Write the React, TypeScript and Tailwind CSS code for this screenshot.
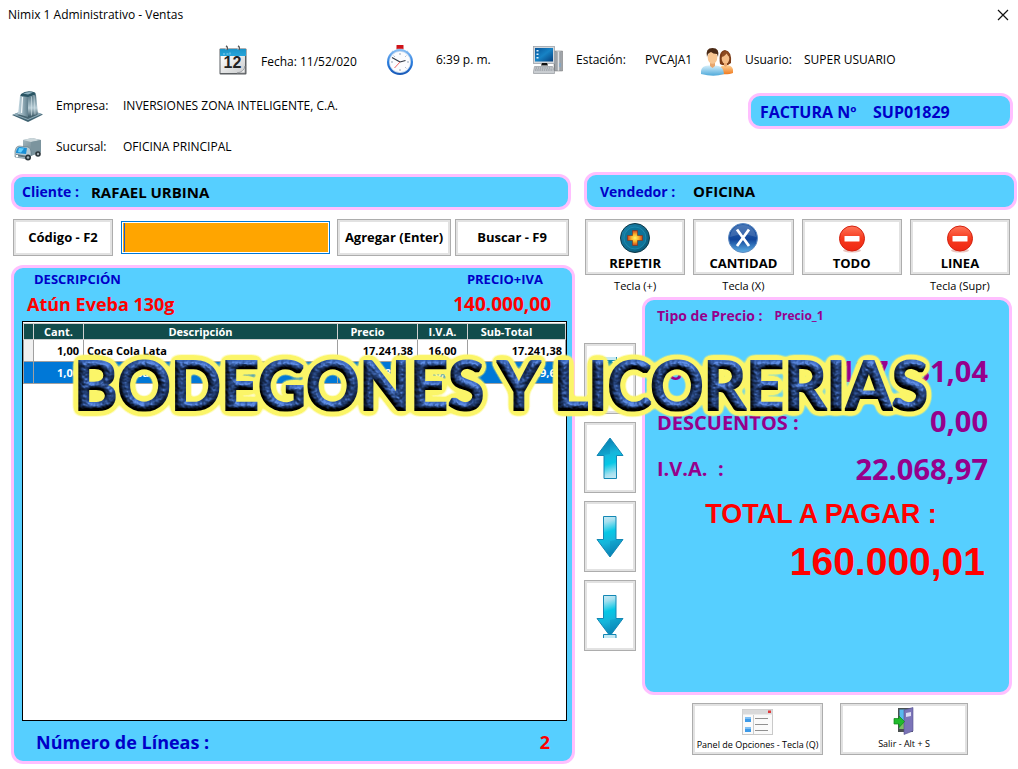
import React from "react";

const SANS = "font-['Open_Sans','Noto_Sans',sans-serif]";
const PANEL = "rounded-xl border-3 border-[#ffbfff] bg-[#56cfff]";
const BUTTON =
  "border border-[#adadad] bg-white shadow-[inset_0_0_0_2px_#e2e2e2] font-bold text-black";

function CalendarIcon() {
  return (
    <svg className="h-[31px] w-7 shrink-0" viewBox="0 0 28 31" aria-hidden="true">
      <defs>
        <linearGradient id="cal-top" x1="0" y1="0" x2="0" y2="1">
          <stop offset="0" stopColor="#1b93c8" />
          <stop offset="1" stopColor="#27a5da" />
        </linearGradient>
        <linearGradient id="cal-page" x1="0" y1="0" x2="1" y2="1">
          <stop offset="0" stopColor="#ffffff" />
          <stop offset="1" stopColor="#c9cbcc" />
        </linearGradient>
      </defs>
      <rect x="0.5" y="3.5" width="27" height="26" rx="1" fill="#5b5f62" />
      <rect x="1.5" y="11" width="24.5" height="17" fill="url(#cal-page)" />
      <rect x="1" y="4" width="26" height="7" fill="url(#cal-top)" />
      <path d="M4 9h2M7.500 9h2M11 7.500v2" stroke="#8ed3f0" strokeWidth="1" />
      <path d="M26 21v7h-8q7-1 8-7z" fill="#eeeeee" stroke="#8a8d90" strokeWidth="0.7" />
      <path d="M7 1q2 1 1 4M19 1q2 1 1 4" fill="none" stroke="#555" strokeWidth="1.4" />
      <path d="M6 1.500q2 1 1 3M18 1.500q2 1 1 3" fill="none" stroke="#eee" strokeWidth="0.9" />
      <text x="13.500" y="23" textAnchor="middle" fontSize="16" fontWeight="700" fill="#222" fontFamily="Liberation Sans, sans-serif">12</text>
    </svg>
  );
}

function StopwatchIcon() {
  return (
    <svg className="h-[31px] w-7 shrink-0" viewBox="0 0 28 31" aria-hidden="true">
      <defs>
        <linearGradient id="watch-ring" x1="0" y1="0" x2="0" y2="1">
          <stop offset="0" stopColor="#8dc2f5" />
          <stop offset="0.5" stopColor="#2c7fe0" />
          <stop offset="1" stopColor="#1757b5" />
        </linearGradient>
      </defs>
      <rect x="9.500" y="0" width="7" height="4.500" rx="0.500" fill="#d01318" />
      <path d="M11 4.500h4v2h-4zM5 6l3 2M21 6l-3 2" stroke="#c9d3df" strokeWidth="1.500" fill="#ccc" />
      <circle cx="13" cy="17" r="13" fill="url(#watch-ring)" />
      <circle cx="13" cy="17" r="10.900" fill="#c9dcf0" />
      <circle cx="13" cy="17" r="10.200" fill="#fbfcfe" />
      <path d="M13 8v2M13 24v2M4 17h2M20 17h2M6.700 10.700l1 1M18.300 22.300l1 1M19.300 10.700l-1 1" stroke="#7f92a8" strokeWidth="0.800" />
      <path d="M13 17l-8-4.500M13 17l5.500-1.500" stroke="#2f3540" strokeWidth="1.100" />
      <path d="M13 17l-5.500 6" stroke="#f06565" strokeWidth="1" />
    </svg>
  );
}

function ComputerIcon() {
  return (
    <svg className="h-[28px] w-[30px] shrink-0" viewBox="0 0 30 28" aria-hidden="true">
      <defs>
        <linearGradient id="pc-screen" x1="0" y1="0" x2="1" y2="1">
          <stop offset="0" stopColor="#07549a" />
          <stop offset="0.5" stopColor="#1783c5" />
          <stop offset="1" stopColor="#063f7d" />
        </linearGradient>
        <linearGradient id="pc-tower" x1="0" y1="0" x2="1" y2="0">
          <stop offset="0" stopColor="#777c82" />
          <stop offset="0.500" stopColor="#e8eaec" />
          <stop offset="1" stopColor="#8b9096" />
        </linearGradient>
      </defs>
      <path d="M21 5h8.500v20h-8.500z" fill="url(#pc-tower)" stroke="#777" strokeWidth="0.500" />
      <path d="M24 6v19M27 6v19" stroke="#70757b" strokeWidth="0.700" />
      <path d="M27 17v4" stroke="#72a8d8" strokeWidth="1" />
      <rect x="0.500" y="0.500" width="21" height="17" fill="#d3d7dc" stroke="#9da3aa" strokeWidth="0.800" />
      <rect x="2" y="2" width="18" height="13.500" fill="url(#pc-screen)" />
      <path d="M3.500 4h2v1.500h-2zM3.500 7.500h2v1.500h-2zM3.500 11h2v1.500h-2z" fill="#dff1ff" />
      <path d="M9 17h5l1 2.500h-7z" fill="#111" />
      <path d="M1.500 20.500h18l2 5v2h-21v-2z" fill="#c9cdd1" stroke="#868b91" strokeWidth="0.600" />
      <path d="M2.500 22h16M2 24h18" stroke="#7f858b" strokeWidth="0.900" strokeDasharray="1.500 0.700" />
    </svg>
  );
}

function UsersIcon() {
  return (
    <svg className="mt-1 h-7 w-8 shrink-0" viewBox="0 0 32 28" aria-hidden="true">
      <defs>
        <linearGradient id="user-blue" x1="0" y1="0" x2="0" y2="1">
          <stop offset="0" stopColor="#d5effb" />
          <stop offset="1" stopColor="#4ea9da" />
        </linearGradient>
        <linearGradient id="user-orange" x1="0" y1="0" x2="0" y2="1">
          <stop offset="0" stopColor="#ffd59a" />
          <stop offset="1" stopColor="#f0791d" />
        </linearGradient>
      </defs>
      <path d="M19 16Q17 3 24 2Q31 3 30 15L27 17H21z" fill="#7c3d18" />
      <path d="M17 26q0-9 8-9t7 8q-4 2-15 1z" fill="url(#user-orange)" />
      <ellipse cx="24.500" cy="10.500" rx="3.800" ry="5.200" fill="#f5bd87" />
      <path d="M23 15h3v3l-1.500 1-1.500-1z" fill="#edaa70" />
      <path d="M20.500 9q4-1 5-4 1 3 3.500 4-1-6-4.500-6t-4 6z" fill="#8f4b20" />
      <path d="M0 26q-1-8 7-8.500h8q8 .500 8 8.500-10 3.500-23 0z" fill="url(#user-blue)" />
      <path d="M9 13h5v5l-2.500 2-2.500-2z" fill="#e8a66d" />
      <ellipse cx="11.500" cy="9.500" rx="4.800" ry="6.300" fill="#f8c692" />
      <path d="M6 9Q4 0 11.500 0T17 9l-1-3q-4 0-6-2-2 1-3 2z" fill="#4b2a15" />
    </svg>
  );
}

function BuildingIcon() {
  return (
    <svg className="h-[31px] w-8 shrink-0" viewBox="0 0 32 31" aria-hidden="true">
      <defs>
        <linearGradient id="tower-left" x1="0" y1="0" x2="1" y2="0">
          <stop offset="0" stopColor="#c6dae3" />
          <stop offset="1" stopColor="#607f8d" />
        </linearGradient>
        <linearGradient id="tower-right" x1="0" y1="0" x2="0" y2="1">
          <stop offset="0" stopColor="#50717f" />
          <stop offset="0.600" stopColor="#b9ced7" />
          <stop offset="1" stopColor="#3a5866" />
        </linearGradient>
      </defs>
      <path d="M0 24l15-6 16 5.500-15 7.500z" fill="#3f6271" />
      <path d="M1 23.500l15-5.500 14 5-14 6z" fill="#8fabb8" />
      <path d="M5 24l10-3.500 11 3-10 4.500z" fill="#46636f" />
      <path d="M9 3q6-4.500 14-1.500l1 2-8 3-8-1z" fill="#2a5564" />
      <path d="M11 2.500q5-2.500 10-1l-5 2z" fill="#8fb2c0" />
      <path d="M8 5l8 1v20l-10-3z" fill="url(#tower-left)" />
      <path d="M16 6l8-2.500 2 19.500-10 3z" fill="url(#tower-right)" />
      <path d="M19.500 5.500v19M22 4.500l1 19" stroke="#d6e5eb" strokeWidth="0.600" />
      <path d="M10.500 6l-1 16" stroke="#f2f8fa" strokeWidth="1.200" />
    </svg>
  );
}

function TruckIcon() {
  return (
    <svg className="h-[23px] w-7 shrink-0" viewBox="0 0 28 23" aria-hidden="true">
      <defs>
        <linearGradient id="truck-box" x1="0" y1="0" x2="1" y2="1">
          <stop offset="0" stopColor="#a6b9c0" />
          <stop offset="1" stopColor="#55707c" />
        </linearGradient>
      </defs>
      <path d="M9 2l9-2 9 2v12l-11 4-7-4z" fill="url(#truck-box)" />
      <path d="M9 2l9-2 9 2-10 2z" fill="#cbd7db" />
      <path d="M17 4v14l10-4V2z" fill="#7b949e" />
      <circle cx="24" cy="16" r="2.800" fill="#2b353a" />
      <circle cx="24" cy="16" r="1.200" fill="#a9b4b9" />
      <path d="M1 13q1-5 4-5l9 1q3 1 3 5v4l-3 3-13-2z" fill="#b7cad3" stroke="#5d7682" strokeWidth="0.600" />
      <path d="M2 14q1-5 4-5l7 1-1 6-10-1z" fill="#1a8fd5" />
      <path d="M5 10l5 .5-3 4-3-.5z" fill="#66d2ff" />
      <path d="M2 16l9 1.500v2L2 18z" fill="#60747e" />
      <circle cx="14" cy="19.500" r="3" fill="#2b353a" />
      <circle cx="14" cy="19.500" r="1.300" fill="#a9b4b9" />
      <circle cx="3" cy="18" r="1.200" fill="#fff" />
    </svg>
  );
}

function PlusIcon() {
  return (
    <svg className="h-[30px] w-[30px]" viewBox="0 0 30 30" aria-hidden="true">
      <defs>
        <linearGradient id="plus-ball" x1="0" y1="0" x2="1" y2="1">
          <stop offset="0" stopColor="#1c84ae" />
          <stop offset="1" stopColor="#075673" />
        </linearGradient>
        <radialGradient id="plus-cross">
          <stop offset="0" stopColor="#fff86a" />
          <stop offset="0.500" stopColor="#f9b22b" />
          <stop offset="1" stopColor="#cf421c" />
        </radialGradient>
      </defs>
      <circle cx="15" cy="15" r="14.500" fill="url(#plus-ball)" stroke="#103745" />
      <circle cx="15" cy="15" r="11" fill="#0e7398" stroke="#1f8fb4" strokeWidth="0.800" />
      <path d="M12.500 7.500h5v5H22.500v5h-5v5h-5v-5h-5v-5h5z" fill="url(#plus-cross)" stroke="#7f321c" strokeWidth="0.600" />
    </svg>
  );
}

function TimesIcon() {
  return (
    <svg className="h-[30px] w-[30px]" viewBox="0 0 30 30" aria-hidden="true">
      <defs>
        <linearGradient id="times-ball" x1="0" y1="0" x2="0" y2="1">
          <stop offset="0" stopColor="#2d63ab" />
          <stop offset="0.550" stopColor="#11459a" />
          <stop offset="1" stopColor="#5db0e6" />
        </linearGradient>
      </defs>
      <circle cx="15" cy="15" r="14.500" fill="url(#times-ball)" stroke="#5c89c1" />
      <path d="M2 14q2-12 13-12t13 12q-13-5-26 0z" fill="#ffffff" opacity="0.150" />
      <path d="M9 6.500l12 16.500M21 6.500L9 23" stroke="#fff" strokeWidth="2.800" />
    </svg>
  );
}

function MinusIcon() {
  return (
    <svg className="h-[30px] w-[30px]" viewBox="0 0 30 30" aria-hidden="true">
      <defs>
        <linearGradient id="minus-ball" x1="0" y1="0" x2="0" y2="1">
          <stop offset="0" stopColor="#ff765a" />
          <stop offset="0.500" stopColor="#f63a1d" />
          <stop offset="1" stopColor="#ef2814" />
        </linearGradient>
      </defs>
      <ellipse cx="15" cy="27.500" rx="9" ry="2" fill="#e9c5c0" />
      <circle cx="15" cy="15.500" r="12.500" fill="url(#minus-ball)" stroke="#d3200f" />
      <rect x="7.500" y="13" width="15" height="5.500" rx="0.600" fill="#fff" />
    </svg>
  );
}

function ArrowIcon({ up = false, bar = false }: { up?: boolean; bar?: boolean }) {
  return (
    <svg className={up ? "h-11 w-7 rotate-180" : "h-11 w-7"} viewBox="0 0 28 44" aria-hidden="true">
      <defs>
        <linearGradient id="arrow-fill" x1="0" y1="0" x2="0.200" y2="1">
          <stop offset="0" stopColor="#d9eef6" />
          <stop offset="0.200" stopColor="#a5e0ef" />
          <stop offset="0.450" stopColor="#06c8e6" />
          <stop offset="0.700" stopColor="#17b4da" />
          <stop offset="1" stopColor="#0a86b8" />
        </linearGradient>
      </defs>
      <path d="M7.500 1.500h12.500v23h7L14 42 1 24.500h6.500z" fill="url(#arrow-fill)" stroke="#1387b4" />
      <path d="M14 26v15l12-16h-6z" fill="#0786b5" opacity="0.350" />
      {bar && <path d="M7.500 44v-3.500h12.500V44" fill="#c4e8f3" stroke="#1387b4" />}
    </svg>
  );
}

function OptionsIcon() {
  return (
    <svg className="h-[26px] w-[31px]" viewBox="0 0 31 26" aria-hidden="true">
      <rect x="0.500" y="0.500" width="30" height="25" fill="#fafafa" stroke="#c9c9c9" />
      <rect x="0.500" y="0.500" width="30" height="5" fill="#d9d9da" />
      <rect x="26" y="1.500" width="3" height="2.500" fill="#e0383a" />
      <path d="M11.500 6v19" stroke="#ccc" />
      <rect x="3" y="8" width="6" height="5" fill="#3d9ae8" />
      <rect x="3" y="18" width="6" height="5" fill="#3d9ae8" />
      <path d="M3 8h6v2H3zM3 18h6v2H3z" fill="#7fc0f5" />
      <path d="M13 9.500h13M13 15.500h13M13 21.500h13" stroke="#909090" />
    </svg>
  );
}

function ExitIcon() {
  return (
    <svg className="h-7 w-[22px]" viewBox="0 0 22 28" aria-hidden="true">
      <path d="M5 1h15v24H5z" fill="#4a5050" />
      <path d="M6.500 2.500h8V22h-8z" fill="#58b8ee" />
      <path d="M6.500 15h6v7h-6z" fill="#7dbd64" />
      <path d="M11 3l9-2.500V24l-9 3.500z" fill="#7b74b8" stroke="#56508f" strokeWidth="0.600" />
      <path d="M13 6l5-1v4l-5 1z" fill="#dcdcf3" />
      <path d="M1 11.500h5V9l5.500 5.500L6 20.500V17H1z" fill="#20bb2c" stroke="#0b861a" strokeWidth="0.700" />
    </svg>
  );
}

function BannerFilter() {
  return (
    <svg className="absolute h-0 w-0" aria-hidden="true">
      <filter id="embossed" x="-5%" y="-20%" width="110%" height="140%" colorInterpolationFilters="sRGB">
        <feMorphology in="SourceAlpha" operator="dilate" radius="1" result="glyphs" />
        <feGaussianBlur in="glyphs" stdDeviation="3" result="wide" />
        <feComponentTransfer in="wide" result="outline">
          <feFuncA type="linear" slope="16" intercept="-0.300" />
        </feComponentTransfer>
        <feFlood floodColor="#fbf568" result="yellow" />
        <feComposite in="yellow" in2="outline" operator="in" result="halo" />
        <feGaussianBlur in="glyphs" stdDeviation="2" result="soft" />
        <feTurbulence type="fractalNoise" baseFrequency="0.300" numOctaves="2" seed="4" result="noise" />
        <feColorMatrix in="noise" type="matrix" values="0 0 0 0 0  0 0 0 0 0  0 0 0 0 0  0.500 0 0 0 0" result="grain" />
        <feComposite in="soft" in2="grain" operator="arithmetic" k1="0" k2="0.700" k3="0.350" k4="0" result="height" />
        <feDiffuseLighting in="height" surfaceScale="6" diffuseConstant="1.200" lightingColor="#274a8c" result="light">
          <feDistantLight azimuth="290" elevation="42" />
        </feDiffuseLighting>
        <feSpecularLighting in="height" surfaceScale="6" specularConstant="0.600" specularExponent="12" lightingColor="#93a6ca" result="shine">
          <feDistantLight azimuth="290" elevation="25" />
        </feSpecularLighting>
        <feComposite in="light" in2="shine" operator="arithmetic" k1="0" k2="1" k3="0.600" k4="0" result="lit" />
        <feComposite in="lit" in2="glyphs" operator="in" result="letters" />
        <feMerge>
          <feMergeNode in="halo" />
          <feMergeNode in="letters" />
        </feMerge>
      </filter>
    </svg>
  );
}

const lines = [
  { qty: "1,00", name: "Coca Cola Lata", price: "17.241,38", tax: "16,00", total: "17.241,38" },
  { qty: "1,00", name: "Atún Eveba 130g", price: "120.689,66", tax: "16,00", total: "120.689,66" },
];

const actions = [
  { label: "REPETIR", hint: "Tecla (+)", icon: <PlusIcon /> },
  { label: "CANTIDAD", hint: "Tecla (X)", icon: <TimesIcon /> },
  { label: "TODO", hint: "", icon: <MinusIcon /> },
  { label: "LINEA", hint: "Tecla (Supr)", icon: <MinusIcon /> },
];

function Header() {
  return (
    <header>
      <div className="flex h-[30px] items-center justify-between pr-[7px] pl-2">
        <h1 className="text-xs">Nimix 1 Administrativo - Ventas</h1>
        <button type="button" aria-label="Cerrar" className="flex h-4 w-4 items-center justify-center">
          <svg className="h-3 w-3" viewBox="0 0 12 12" aria-hidden="true">
            <path d="M1 1l10 10M11 1L1 11" stroke="#111" strokeWidth="1.200" />
          </svg>
        </button>
      </div>
      <div className="flex h-[60px] items-center pl-[219px] text-xs whitespace-nowrap">
        <div className="flex w-[168px] items-center gap-[14px]">
          <CalendarIcon />
          <span className="pt-1">Fecha: 11/52/020</span>
        </div>
        <div className="flex w-[146px] items-center gap-[21px]">
          <StopwatchIcon />
          <span>6:39 p. m.</span>
        </div>
        <div className="flex w-[168px] items-center">
          <ComputerIcon />
          <span className="ml-[13px] w-[69px]">Estación:</span>
          <span>PVCAJA1</span>
        </div>
        <div className="flex items-center">
          <UsersIcon />
          <span className="ml-3 w-[59px]">Usuario:</span>
          <span>SUPER USUARIO</span>
        </div>
      </div>
      <div className="flex h-[82px] items-start justify-between pr-[5px] pl-3">
        <div className="flex flex-col gap-[9px] text-xs">
          <div className="flex h-8 items-center">
            <span className="w-11"><BuildingIcon /></span>
            <span className="w-[67px]">Empresa:</span>
            <span>INVERSIONES ZONA INTELIGENTE, C.A.</span>
          </div>
          <div className="flex h-8 items-center">
            <span className="w-11 pt-1 pl-[2px]"><TruckIcon /></span>
            <span className="w-[67px]">Sucursal:</span>
            <span>OFICINA PRINCIPAL</span>
          </div>
        </div>
        <div className={`mt-[3px] flex h-9 w-[265px] items-center pt-[2px] pl-[9px] text-base font-bold text-[#0000c8] ${PANEL}`}>
          <span className="w-[113px]">FACTURA Nº</span>
          <span>SUP01829</span>
        </div>
      </div>
    </header>
  );
}

function LinesTable() {
  return (
    <div className="flex-1 border border-black bg-white pt-px">
      <table className="w-full table-fixed border-collapse text-[11px] leading-4 font-bold">
        <colgroup>
          <col className="w-[10px]" />
          <col className="w-[50px]" />
          <col />
          <col className="w-20" />
          <col className="w-[50px]" />
          <col className="w-[98px]" />
        </colgroup>
        <thead>
          <tr className="bg-[#124c4c] leading-[15px] text-white">
            <th className="border border-[#d0d0d0] p-0" aria-label="Selección" />
            <th className="border border-[#d0d0d0] p-0">Cant.</th>
            <th className="border border-[#d0d0d0] p-0 pr-5">Descripción</th>
            <th className="border border-[#d0d0d0] p-0 pr-5">Precio</th>
            <th className="border border-[#d0d0d0] p-0">I.V.A.</th>
            <th className="border border-[#d0d0d0] p-0 pr-5">Sub-Total</th>
          </tr>
        </thead>
        <tbody>
          {lines.map((line, i) => (
            <tr
              key={line.name}
              className={i === 1 ? "h-[22px] bg-[#0078d7] text-white" : "h-[22px] bg-white text-black"}
            >
              <td className={i === 1 ? "border border-[#a0a0a0] p-0" : "border border-[#a0a0a0] bg-[#f0f0f0] p-0"} />
              <td className="border border-[#a0a0a0] p-0 pr-1 text-right">{line.qty}</td>
              <td className="border border-[#a0a0a0] p-0 pl-[3px]">{line.name}</td>
              <td className="border border-[#a0a0a0] p-0 pr-1 text-right">{line.price}</td>
              <td className="border border-[#a0a0a0] p-0 text-center">{line.tax}</td>
              <td className="border border-[#a0a0a0] p-0 pr-[3px] text-right">{line.total}</td>
            </tr>
          ))}
        </tbody>
      </table>
    </div>
  );
}

function SaleColumn() {
  return (
    <section className="flex min-w-0 flex-col pt-[2px]">
      <div className={`mr-1 flex h-9 items-center gap-3 pl-2 text-[15px] font-bold ${PANEL}`}>
        <span className="text-sm text-[#0000c8]">Cliente :</span>
        <span>RAFAEL URBINA</span>
      </div>
      <div className="mt-[9px] mr-[6px] ml-[2px] flex h-[37px] items-center text-[13px]">
        <button type="button" className={`h-full w-[100px] ${BUTTON}`}>Código - F2</button>
        <input
          aria-label="Código del producto"
          className="mr-[7px] ml-2 h-[33px] min-w-0 flex-1 border border-[#0078d7] bg-[#ffa500] px-1 shadow-[inset_0_0_0_1px_#ffffff,inset_2px_0_0_0_#ffa500,inset_3px_0_0_0_#1a5fd0] outline-none"
        />
        <button type="button" className={`h-full w-[114px] whitespace-nowrap ${BUTTON}`}>Agregar (Enter)</button>
        <button type="button" className={`ml-1 h-full w-[114px] ${BUTTON}`}>Buscar - F9</button>
      </div>
      <div className={`mt-[9px] flex flex-1 flex-col pr-[5px] pl-2 font-bold ${PANEL}`}>
        <div className="flex h-[23px] items-center justify-between pr-6 pl-3 text-[13px] text-[#0000c8]">
          <span>DESCRIPCIÓN</span>
          <span>PRECIO+IVA</span>
        </div>
        <div className="flex h-[30px] items-start justify-between pr-4 pl-[5px] text-lg leading-[26px] text-[#ff0000]">
          <span>Atún Eveba 130g</span>
          <span className="text-[19px]">140.000,00</span>
        </div>
        <LinesTable />
        <div className="flex h-10 items-center justify-between pt-px pr-[17px] pl-[14px] text-lg">
          <span className="text-[#0000c8]">Número de Líneas :</span>
          <span className="text-[#ff0000]">2</span>
        </div>
      </div>
    </section>
  );
}

function TotalsPanel() {
  return (
    <div className={`flex h-[398px] min-w-0 flex-1 flex-col pr-[21px] pl-3 font-bold text-[#96008c] ${PANEL}`}>
      <div className="flex h-8 items-center gap-3 text-sm">
        <span>Tipo de Precio :</span>
        <span className="text-xs">Precio_1</span>
      </div>
      <div className="mt-[14px] flex h-[50px] items-center justify-between text-xl">
        <span className="pt-1">SUB-TOTAL :</span>
        <span className="text-[29px]">137.931,04</span>
      </div>
      <div className="flex h-[50px] items-center justify-between text-xl">
        <span className="pt-1">DESCUENTOS :</span>
        <span className="text-[29px]">0,00</span>
      </div>
      <div className="flex h-[46px] items-center justify-between text-xl">
        <span className="whitespace-pre">I.V.A.  :</span>
        <span className="text-[29px]">22.068,97</span>
      </div>
      <div className="pt-[2px] pr-[3px] font-['Liberation_Sans',Arial,sans-serif] text-[#ff0000]">
        <p className="text-center text-[27px] leading-10">TOTAL A PAGAR :</p>
        <p className="pt-[6px] text-right text-[39px] leading-[44px]">160.000,01</p>
      </div>
    </div>
  );
}

function ControlColumn() {
  return (
    <section className="flex min-w-0 flex-col">
      <div className={`flex h-[38px] items-center pt-px pl-[13px] text-[15px] font-bold ${PANEL}`}>
        <span className="w-[93px] text-sm text-[#0000c8]">Vendedor :</span>
        <span>OFICINA</span>
      </div>
      <div className="mt-[9px] mr-[7px] ml-px grid grid-cols-4 gap-2">
        {actions.map((action) => (
          <div key={action.label} className="flex flex-col items-center">
            <button type="button" className={`flex h-14 w-full flex-col items-center pt-[3px] text-[13px] leading-5 ${BUTTON}`}>
              {action.icon}
              {action.label}
            </button>
            <span className="h-[22px] pt-[3px] text-[11px] leading-4">{action.hint}</span>
          </div>
        ))}
      </div>
      <div className="mr-[5px] flex items-start gap-[6px]">
        <div className="flex w-[52px] flex-col gap-2 pt-[46px]">
          <button type="button" aria-label="Primera línea" className={`flex h-[71px] items-center justify-center ${BUTTON}`}>
            <ArrowIcon up bar />
          </button>
          <button type="button" aria-label="Línea anterior" className={`flex h-[71px] items-center justify-center ${BUTTON}`}>
            <ArrowIcon up />
          </button>
          <button type="button" aria-label="Línea siguiente" className={`flex h-[71px] items-center justify-center ${BUTTON}`}>
            <ArrowIcon />
          </button>
          <button type="button" aria-label="Última línea" className={`flex h-[71px] items-center justify-center ${BUTTON}`}>
            <ArrowIcon bar />
          </button>
        </div>
        <TotalsPanel />
      </div>
      <div className="mt-2 mr-[49px] flex justify-end gap-[17px] text-[9px] leading-[14px]">
        <button type="button" className={`flex h-[52px] w-[131px] flex-col items-center justify-between pt-[5px] pb-[2px] whitespace-nowrap ${BUTTON}`}>
          <OptionsIcon />
          <span className="font-normal">Panel de Opciones - Tecla (Q)</span>
        </button>
        <button type="button" className={`flex h-[52px] w-32 flex-col items-center justify-between pt-[3px] pb-[3px] ${BUTTON}`}>
          <ExitIcon />
          <span className="font-normal">Salir - Alt + S</span>
        </button>
      </div>
    </section>
  );
}

export default function App() {
  return (
    <div className={`relative min-h-screen bg-white text-black ${SANS}`}>
      <Header />
      <main className="grid min-h-[592px] grid-cols-[564fr_433fr] gap-[9px] pr-px pl-[11px]">
        <SaleColumn />
        <ControlColumn />
      </main>
      <BannerFilter />
      <p className="pointer-events-none absolute top-[340px] right-0 left-0 pr-4 text-center font-['Lato',sans-serif] text-[66px] leading-[90px] font-bold whitespace-nowrap [filter:url(#embossed)]">
        BODEGONES Y LICORERIAS
      </p>
    </div>
  );
}
